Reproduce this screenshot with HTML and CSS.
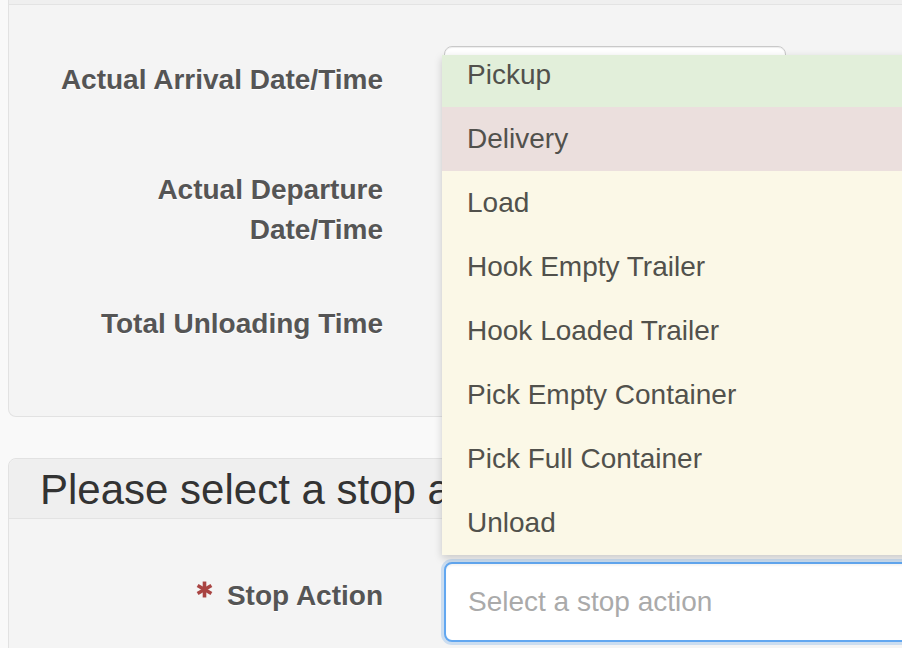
FILE: index.html
```html
<!DOCTYPE html>
<html lang="en">
<head>
  <meta charset="UTF-8">
  <meta name="viewport" content="width=device-width, initial-scale=1.0">
  <title>Stop Details</title>
  <link rel="stylesheet" href="styles.css">
</head>
<body>
  <div class="page">
    <div class="panel panel-top">
      <div class="panel-heading sliver"></div>
      <div class="panel-body">
        <div class="form-group">
          <label class="control-label">Actual Arrival Date/Time</label>
          <div class="field"><div class="input short"></div></div>
        </div>
        <div class="form-group">
          <label class="control-label">Actual Departure<br>Date/Time</label>
          <div class="field"><div class="input short"></div></div>
        </div>
        <div class="form-group last">
          <label class="control-label">Total Unloading Time</label>
          <div class="field"><div class="input short"></div></div>
        </div>
      </div>
    </div>

    <div class="panel panel-stop">
      <div class="panel-heading">
        <h3>Please select a stop action</h3>
      </div>
      <div class="panel-body">
        <div class="form-group last">
          <label class="control-label">
            <svg class="required" width="17" height="17" viewBox="0 0 16 16">
              <g stroke="#a94442" stroke-width="3.4" stroke-linecap="butt">
                <line x1="8" y1="0.5" x2="8" y2="15.5"/>
                <line x1="1.5" y1="4.25" x2="14.5" y2="11.75"/>
                <line x1="1.5" y1="11.75" x2="14.5" y2="4.25"/>
              </g>
            </svg>Stop Action
          </label>
          <div class="field">
            <div class="select-box focused">
              <span class="placeholder">Select a stop action</span>
              <div class="dropdown">
                <ul class="options">
                  <li class="opt pickup">Pickup</li>
                  <li class="opt delivery">Delivery</li>
                  <li class="opt">Load</li>
                  <li class="opt">Hook Empty Trailer</li>
                  <li class="opt">Hook Loaded Trailer</li>
                  <li class="opt">Pick Empty Container</li>
                  <li class="opt">Pick Full Container</li>
                  <li class="opt">Unload</li>
                </ul>
              </div>
            </div>
          </div>
        </div>
      </div>
    </div>
  </div>
</body>
</html>
```

FILE: styles.css
```css
* { margin: 0; padding: 0; box-sizing: border-box; }
html, body { overflow: hidden; }
body { background: #f9f9f9; color: #333; font-family: "Liberation Sans", Arial, sans-serif; width: 902px; height: 648px; }
.page { width: 1300px; padding-left: 8px; }

.panel { background: #f4f4f4; border: 1px solid #e2e2e2; border-radius: 8px; }
.panel-top { border-top: none; border-top-left-radius: 0; border-top-right-radius: 0; margin-bottom: 41px; }
.panel-heading { background: #efefef; border-bottom: 1px solid #e3e3e3; padding: 8px 31px 5px; border-radius: 8px 8px 0 0; }
.panel-heading.sliver { height: 5px; padding: 0; border-radius: 0; }
.panel-heading h3 { font-size: 42px; font-weight: 400; line-height: 46px; color: #333; white-space: nowrap; }

.panel-top .panel-body { padding: 41px 0 16px; }
.panel-stop .panel-body { padding: 43px 0 40px; }

.form-group { display: grid; grid-template-columns: 374px 700px; column-gap: 61px; margin-bottom: 30px; }
.control-label { display: block; text-align: right; font-weight: 700; font-size: 28px; line-height: 40px; padding-top: 14px; margin-bottom: 10px; color: #555; text-shadow: 0 1px 0 #fff; }
.required { margin-right: 14px; position: relative; top: -7px; }

.input { height: 80px; background: #fff; border: 1px solid #c9c9c9; border-radius: 8px; box-shadow: inset 0 1px 1px rgba(0,0,0,0.075); }
.input.short { width: 342px; }

.select-box { position: relative; height: 80px; background: #fff; border: 2px solid #62a7f0; border-radius: 8px; box-shadow: inset 0 2px 2px rgba(0,0,0,0.04), 0 0 0 3px rgba(98,160,230,0.28); padding-left: 22px; }
.placeholder { display: block; font-size: 28px; line-height: 76px; color: #aaa; }

.dropdown { position: absolute; left: -4px; bottom: calc(100% + 9px); width: 700px; height: 500px; overflow: hidden; background: #fbf8e7; box-shadow: 0 3px 8px rgba(0,0,0,0.18); }
.options { list-style: none; margin-top: -12px; }
.opt { height: 64px; line-height: 64px; padding-left: 25px; font-size: 28px; color: #51514c; background: #fbf8e7; white-space: nowrap; }
.opt.pickup { background: #e2efda; }
.opt.delivery { background: #ebdfdd; }
```
